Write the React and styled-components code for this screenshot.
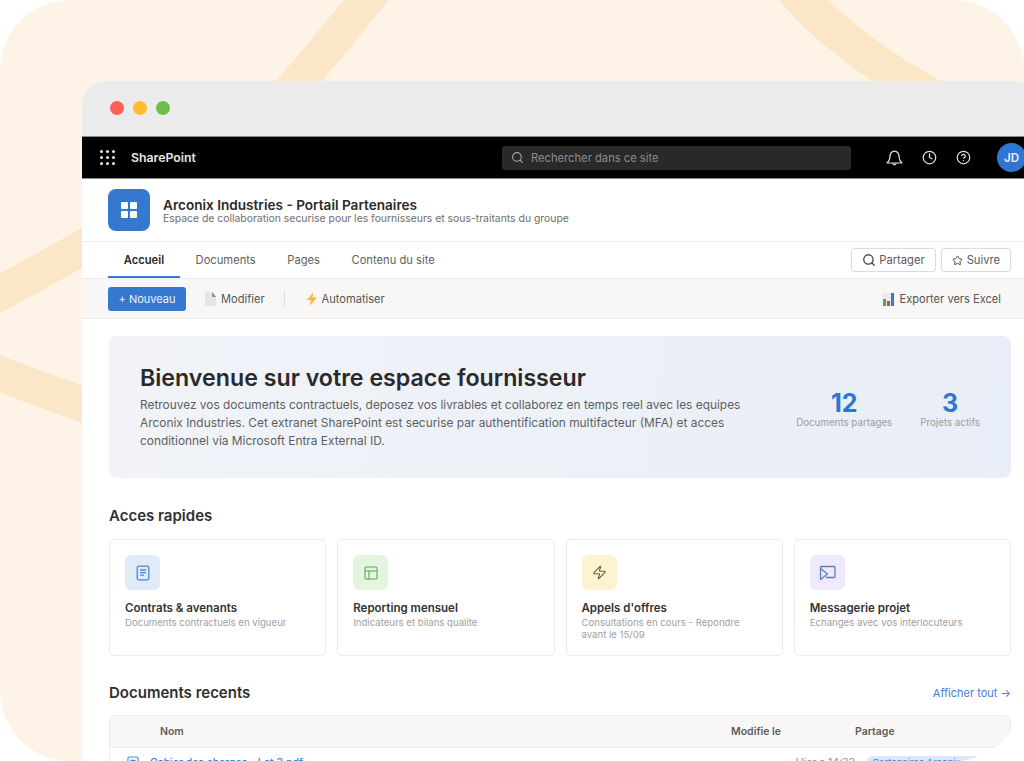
import React from 'react';
import styled, { createGlobalStyle } from 'styled-components';
import { Search, Clock, CircleHelp, Star, PanelsTopLeft, Zap } from 'lucide-react';

const GlobalStyle = createGlobalStyle`
    html, body {
        margin: 0;
        padding: 0;
        background: #ffffff;
        font-family: Inter, "Liberation Sans", sans-serif;
    }
    * { box-sizing: border-box; }
`;

const Stage = styled.div`
    position: relative;
    width: 1024px;
    height: 761px;
    overflow: hidden;
    border-radius: 70px;
    background: #fdf3e6;
    padding: 81px 0 0 82px;
`;

const Bands = styled.svg`
    position: absolute;
    top: 0;
    left: 0;
`;

const Window = styled.div`
    position: relative;
    width: 955px;
    border-radius: 24px 24px 0 0;
    background: #ffffff;
    overflow: hidden;
`;

const TitleBar = styled.div`
    height: 55px;
    background: #ebebeb;
    display: flex;
    align-items: center;
    gap: 9px;
    padding: 0 0 2px 28px;
`;

const Dot = styled.span`
    width: 14px;
    height: 14px;
    border-radius: 50%;
    background: ${props => props.color};
`;

const NavBar = styled.div`
    height: 43px;
    background: #000000;
    border-top: 1px solid #8a8a8a;
    border-bottom: 1px solid #8a8a8a;
    display: flex;
    align-items: center;
    padding: 0 0 0 18px;
`;

const Waffle = styled.div`
    display: grid;
    grid-template-columns: repeat(3, 3px);
    gap: 3px;
    width: 15px;
`;

const WaffleDot = styled.span`
    width: 3px;
    height: 3px;
    border-radius: 50%;
    background: #e6e6e6;
`;

const Brand = styled.div`
    color: #e8e8e8;
    font-size: 12.3px;
    font-weight: 600;
    margin-left: 16px;
    width: 371px;
`;

const SearchBox = styled.div`
    width: 349px;
    height: 24px;
    border-radius: 3px;
    background: #292929;
    display: flex;
    align-items: center;
    gap: 7px;
    padding-left: 9px;
    color: #8c8c8c;
    font-size: 11.2px;
`;

const NavIcons = styled.div`
    display: flex;
    align-items: center;
    margin-left: 35px;
    gap: 19px;
    color: #e0e0e0;
`;

const Avatar = styled.div`
    flex: none;
    width: 29px;
    height: 29px;
    border-radius: 50%;
    background: #2f76d2;
    color: #e8eefa;
    font-size: 11.5px;
    font-weight: 600;
    display: flex;
    align-items: center;
    justify-content: center;
    margin-left: 26px;
`;

const SiteHeader = styled.div`
    height: 63px;
    border-bottom: 1px solid #ececec;
    display: flex;
    align-items: center;
    padding: 0 26px;
    gap: 13px;
`;

const SiteLogo = styled.div`
    width: 42px;
    height: 42px;
    border-radius: 8px;
    background: #3578d0;
    display: flex;
    align-items: center;
    justify-content: center;
`;

const LogoGrid = styled.div`
    display: grid;
    grid-template-columns: 7px 7px;
    gap: 2px;
`;

const LogoCell = styled.span`
    width: 7px;
    height: 7px;
    border-radius: 1px;
    background: #ffffff;
`;

const SiteTitle = styled.div`
    font-size: 13.6px;
    font-weight: 600;
    line-height: 18px;
    color: #2a2a2a;
`;

const SiteSub = styled.div`
    font-size: 10.4px;
    line-height: 10px;
    color: #6e6e6e;
`;

const TabRow = styled.div`
    height: 37px;
    border-bottom: 1px solid #ececec;
    display: flex;
    align-items: stretch;
    justify-content: space-between;
    padding: 0 26px;
`;

const Tabs = styled.div`
    display: flex;
`;

const Tab = styled.div`
    display: flex;
    align-items: center;
    padding: 0 15.75px;
    font-size: 11.2px;
    font-weight: ${props => props.active ? 600 : 400};
    color: ${props => props.active ? '#2a2a2a' : '#5f5f5f'};
    box-shadow: ${props => props.active ? 'inset 0 -2px 0 #3578d0' : 'none'};
`;

const TabActions = styled.div`
    display: flex;
    align-items: center;
    gap: 5px;
`;

const OutlineButton = styled.div`
    height: 24px;
    padding: 0 10px;
    border: 1px solid #dcdcdc;
    border-radius: 3px;
    background: #ffffff;
    display: flex;
    align-items: center;
    gap: ${props => props.gap}px;
    font-size: 11.2px;
    color: #5a5a5a;
`;

const Toolbar = styled.div`
    height: 40px;
    background: #f8f7f6;
    border-bottom: 1px solid #ececec;
    display: flex;
    align-items: center;
    padding: 1px 36px 0 26px;
    font-size: 11.1px;
    color: #555555;
`;

const PrimaryButton = styled.div`
    width: 78px;
    height: 24px;
    border-radius: 3px;
    background: #3578d0;
    color: #eef3fb;
    display: flex;
    align-items: center;
    justify-content: center;
    font-size: 11px;
`;

const ToolItem = styled.div`
    display: flex;
    align-items: center;
    gap: 4px;
    margin-left: ${props => props.offset}px;
`;

const ExportItem = styled(ToolItem)`
    margin-left: auto;
    gap: 5px;
`;

const ToolDivider = styled.span`
    width: 1px;
    height: 17px;
    background: #dddddd;
    margin-left: 19px;
`;

const Main = styled.div`
    padding: 17px 26px 0 27px;
`;

const Hero = styled.div`
    height: 142px;
    border-radius: 8px;
    background: linear-gradient(100deg, #f1f3f8 0%, #e8eef7 100%);
    display: flex;
    align-items: center;
    justify-content: space-between;
    padding: 0 31px;
`;

const HeroCopy = styled.div`
    width: 625px;
`;

const HeroTitle = styled.div`
    font-size: 23.2px;
    font-weight: 600;
    line-height: 26px;
    color: #2a2a2a;
`;

const HeroText = styled.div`
    font-size: 11.9px;
    line-height: 18px;
    color: #5f5f5f;
    margin-top: 5px;
`;

const Stats = styled.div`
    display: flex;
    gap: 28px;
    margin-top: 4px;
`;

const Stat = styled.div`
    text-align: center;
`;

const StatValue = styled.div`
    font-size: 25px;
    font-weight: 700;
    line-height: 28px;
    color: #2f76d2;
`;

const StatLabel = styled.div`
    font-size: 9.75px;
    line-height: 12px;
    color: #9b9b9b;
`;

const SectionHead = styled.div`
    display: flex;
    align-items: center;
    justify-content: space-between;
    height: 20px;
    margin-top: ${props => props.top}px;
`;

const SectionTitle = styled.div`
    font-size: 15px;
    font-weight: 600;
    color: #2f2f2f;
`;

const SeeAll = styled.div`
    font-size: 11px;
    padding-top: 2px;
    color: #3d80d8;
`;

const Cards = styled.div`
    display: grid;
    grid-template-columns: repeat(4, 1fr);
    gap: 11px;
    margin-top: 14px;
`;

const Card = styled.div`
    height: 117px;
    border: 1px solid #ececec;
    border-radius: 5px;
    padding: 15px 15px 0;
`;

const CardIcon = styled.div`
    width: 35px;
    height: 35px;
    border-radius: 6px;
    background: ${props => props.bg};
    color: ${props => props.fg};
    display: flex;
    align-items: center;
    justify-content: center;
`;

const CardTitle = styled.div`
    font-size: 11.5px;
    font-weight: 600;
    line-height: 14px;
    color: #333333;
    margin-top: 11px;
`;

const CardText = styled.div`
    font-size: 9.6px;
    line-height: 12px;
    color: #a0a0a0;
    margin-top: 2px;
`;

const Table = styled.div`
    border: 1px solid #ececec;
    border-radius: 5px;
    margin-top: 13px;
`;

const TableRow = styled.div`
    display: grid;
    grid-template-columns: ${props => props.head ? '50px 571px' : '40px 581px'} 124px 1fr;
    align-items: center;
    height: ${props => props.head ? 32 : 30}px;
    background: ${props => props.head ? '#f8f7f6' : '#ffffff'};
    border-bottom: 1px solid #ececec;
    border-radius: ${props => props.head ? '5px 5px 0 0' : '0'};
    font-size: 10.5px;
    color: #5c5c5c;
    font-weight: ${props => props.head ? 600 : 400};
`;

const DocIcon = styled.div`
    display: flex;
    padding-left: 16px;
    color: #4a88d8;
`;

const DocLink = styled.div`
    color: #3d80d8;
    font-weight: 500;
`;

const DateCell = styled.div`
    color: #8e8e8e;
    text-align: right;
`;

const Pill = styled.span`
    display: inline-block;
    margin-left: 11px;
    padding: 0 20px 0 7px;
    border-radius: 7px;
    background: #dce8f8;
    color: #3d80d8;
    font-size: 9.5px;
    line-height: 14px;
`;

const BellIcon = () => (
    <svg width="17" height="17" viewBox="0 0 17 17" fill="none" stroke="currentColor" strokeWidth="1.2" strokeLinejoin="round">
        <path d="M1 14c1.6-1.2 2.6-2.4 2.8-5.2C4 5 5.8 2.2 8.5 2.2S13 5 13.2 8.8c.2 2.8 1.2 4 2.8 5.2H1z" />
        <path d="M6.8 14.2c.2 1.1.9 1.6 1.7 1.6s1.5-.5 1.7-1.6" />
    </svg>
);

const PageIcon = () => (
    <svg width="13" height="14" viewBox="0 0 13 14">
        <path d="M1 0h7l4 4v10H1z" fill="#e6e6e6" />
        <path d="M8 0l4 5H8z" fill="#8c8c8c" />
    </svg>
);

const BoltIcon = () => (
    <svg width="13" height="14" viewBox="0 0 13 14">
        <path d="M8.5 0L2 8h4l-1.5 6L12 5.5H7.5z" fill="#f5b642" />
    </svg>
);

const ChartIcon = () => (
    <svg width="13" height="14" viewBox="0 0 13 14">
        <rect x="0.5" y="1" width="12" height="13" fill="#e9ecef" />
        <rect x="1" y="7" width="3" height="7" fill="#54a84a" />
        <rect x="5" y="9" width="3" height="5" fill="#d9483b" />
        <rect x="9" y="1" width="3" height="13" fill="#3d78c8" />
    </svg>
);

const DocumentIcon = ({ size = 16 }) => (
    <svg width={size} height={size} viewBox="0 0 16 16" fill="none" stroke="currentColor" strokeWidth="1.3">
        <rect x="2.2" y="1.2" width="11.6" height="13.6" rx="1.6" />
        <path d="M5 5h6M5 7.6h6M5 10.2h4" />
    </svg>
);

const ChatIcon = () => (
    <svg width="17" height="16" viewBox="0 0 17 16" fill="none" stroke="currentColor" strokeWidth="1.3" strokeLinejoin="round">
        <path d="M3 1.5h12a1 1 0 0 1 1 1v9a1 1 0 0 1-1 1H7" />
        <path d="M1.5 3.5v11L8.5 9z" />
        <path d="M1.5 3.5V2.5a1 1 0 0 1 1-1H3" />
    </svg>
);

const TenderIcon = () => <Zap size={15} strokeWidth={1.8} />;
const ReportIcon = () => <PanelsTopLeft size={16} strokeWidth={1.6} />;

const quickLinks = [
    { title: 'Contrats & avenants', text: 'Documents contractuels en vigueur', bg: '#e0eaf8', fg: '#4a88d8', icon: DocumentIcon },
    { title: 'Reporting mensuel', text: 'Indicateurs et bilans qualite', bg: '#e5f4df', fg: '#5aa84c', icon: ReportIcon },
    { title: "Appels d'offres", text: 'Consultations en cours - Repondre avant le 15/09', bg: '#fdf3d3', fg: '#6b5f2a', icon: TenderIcon },
    { title: 'Messagerie projet', text: 'Echanges avec vos interlocuteurs', bg: '#efe9fb', fg: '#5d7fb8', icon: ChatIcon },
];

const App = () => (
    <Stage>
        <GlobalStyle />
        <Bands width="1024" height="761" viewBox="0 0 1024 761" fill="none" stroke="#fbe6c8" strokeWidth="35">
            <path d="M382 -20Q335 40 283 100" />
            <path d="M786 -20Q835 45 955 110" strokeWidth="36" />
            <path d="M-20 304.6L100 238" />
            <path d="M-20 366.6L100 411" />
        </Bands>
        <Window>
            <TitleBar>
                <Dot color="#ff5f57" />
                <Dot color="#febc2e" />
                <Dot color="#6cc04a" />
            </TitleBar>
            <NavBar>
                <Waffle>
                    {Array.from({ length: 9 }).map((_, i) => <WaffleDot key={i} />)}
                </Waffle>
                <Brand>SharePoint</Brand>
                <SearchBox>
                    <Search size={13} color="#a8a8a8" />
                    Rechercher dans ce site
                </SearchBox>
                <NavIcons>
                    <BellIcon />
                    <Clock size={15} />
                    <CircleHelp size={15} />
                </NavIcons>
                <Avatar>JD</Avatar>
            </NavBar>
            <SiteHeader>
                <SiteLogo>
                    <LogoGrid>
                        <LogoCell /><LogoCell /><LogoCell /><LogoCell />
                    </LogoGrid>
                </SiteLogo>
                <div>
                    <SiteTitle>Arconix Industries - Portail Partenaires</SiteTitle>
                    <SiteSub>Espace de collaboration securise pour les fournisseurs et sous-traitants du groupe</SiteSub>
                </div>
            </SiteHeader>
            <TabRow>
                <Tabs>
                    <Tab active>Accueil</Tab>
                    <Tab>Documents</Tab>
                    <Tab>Pages</Tab>
                    <Tab>Contenu du site</Tab>
                </Tabs>
                <TabActions>
                    <OutlineButton gap={3}><Search size={14} strokeWidth={2.2} color="#444" />Partager</OutlineButton>
                    <OutlineButton gap={4}><Star size={11} color="#444" />Suivre</OutlineButton>
                </TabActions>
            </TabRow>
            <Toolbar>
                <PrimaryButton>+ Nouveau</PrimaryButton>
                <ToolItem offset={18}><PageIcon />Modifier</ToolItem>
                <ToolDivider />
                <ToolItem offset={20}><BoltIcon />Automatiser</ToolItem>
                <ExportItem><ChartIcon />Exporter vers Excel</ExportItem>
            </Toolbar>
            <Main>
                <Hero>
                    <HeroCopy>
                        <HeroTitle>Bienvenue sur votre espace fournisseur</HeroTitle>
                        <HeroText>
                            Retrouvez vos documents contractuels, deposez vos livrables et collaborez en temps reel avec les equipes
                            Arconix Industries. Cet extranet SharePoint est securise par authentification multifacteur (MFA) et acces
                            conditionnel via Microsoft Entra External ID.
                        </HeroText>
                    </HeroCopy>
                    <Stats>
                        <Stat>
                            <StatValue>12</StatValue>
                            <StatLabel>Documents partages</StatLabel>
                        </Stat>
                        <Stat>
                            <StatValue>3</StatValue>
                            <StatLabel>Projets actifs</StatLabel>
                        </Stat>
                    </Stats>
                </Hero>
                <SectionHead top={27}>
                    <SectionTitle>Acces rapides</SectionTitle>
                </SectionHead>
                <Cards>
                    {quickLinks.map(link => (
                        <Card key={link.title}>
                            <CardIcon bg={link.bg} fg={link.fg}>
                                <link.icon />
                            </CardIcon>
                            <CardTitle>{link.title}</CardTitle>
                            <CardText>{link.text}</CardText>
                        </Card>
                    ))}
                </Cards>
                <SectionHead top={26}>
                    <SectionTitle>Documents recents</SectionTitle>
                    <SeeAll>Afficher tout →</SeeAll>
                </SectionHead>
                <Table>
                    <TableRow head>
                        <span />
                        <span>Nom</span>
                        <span>Modifie le</span>
                        <span>Partage</span>
                    </TableRow>
                    <TableRow>
                        <DocIcon><DocumentIcon size={14} /></DocIcon>
                        <DocLink>Cahier des charges - Lot 3.pdf</DocLink>
                        <DateCell>Hier a 14:32</DateCell>
                        <div><Pill>Partenaires Arconix</Pill></div>
                    </TableRow>
                </Table>
            </Main>
        </Window>
    </Stage>
);

export default App;
